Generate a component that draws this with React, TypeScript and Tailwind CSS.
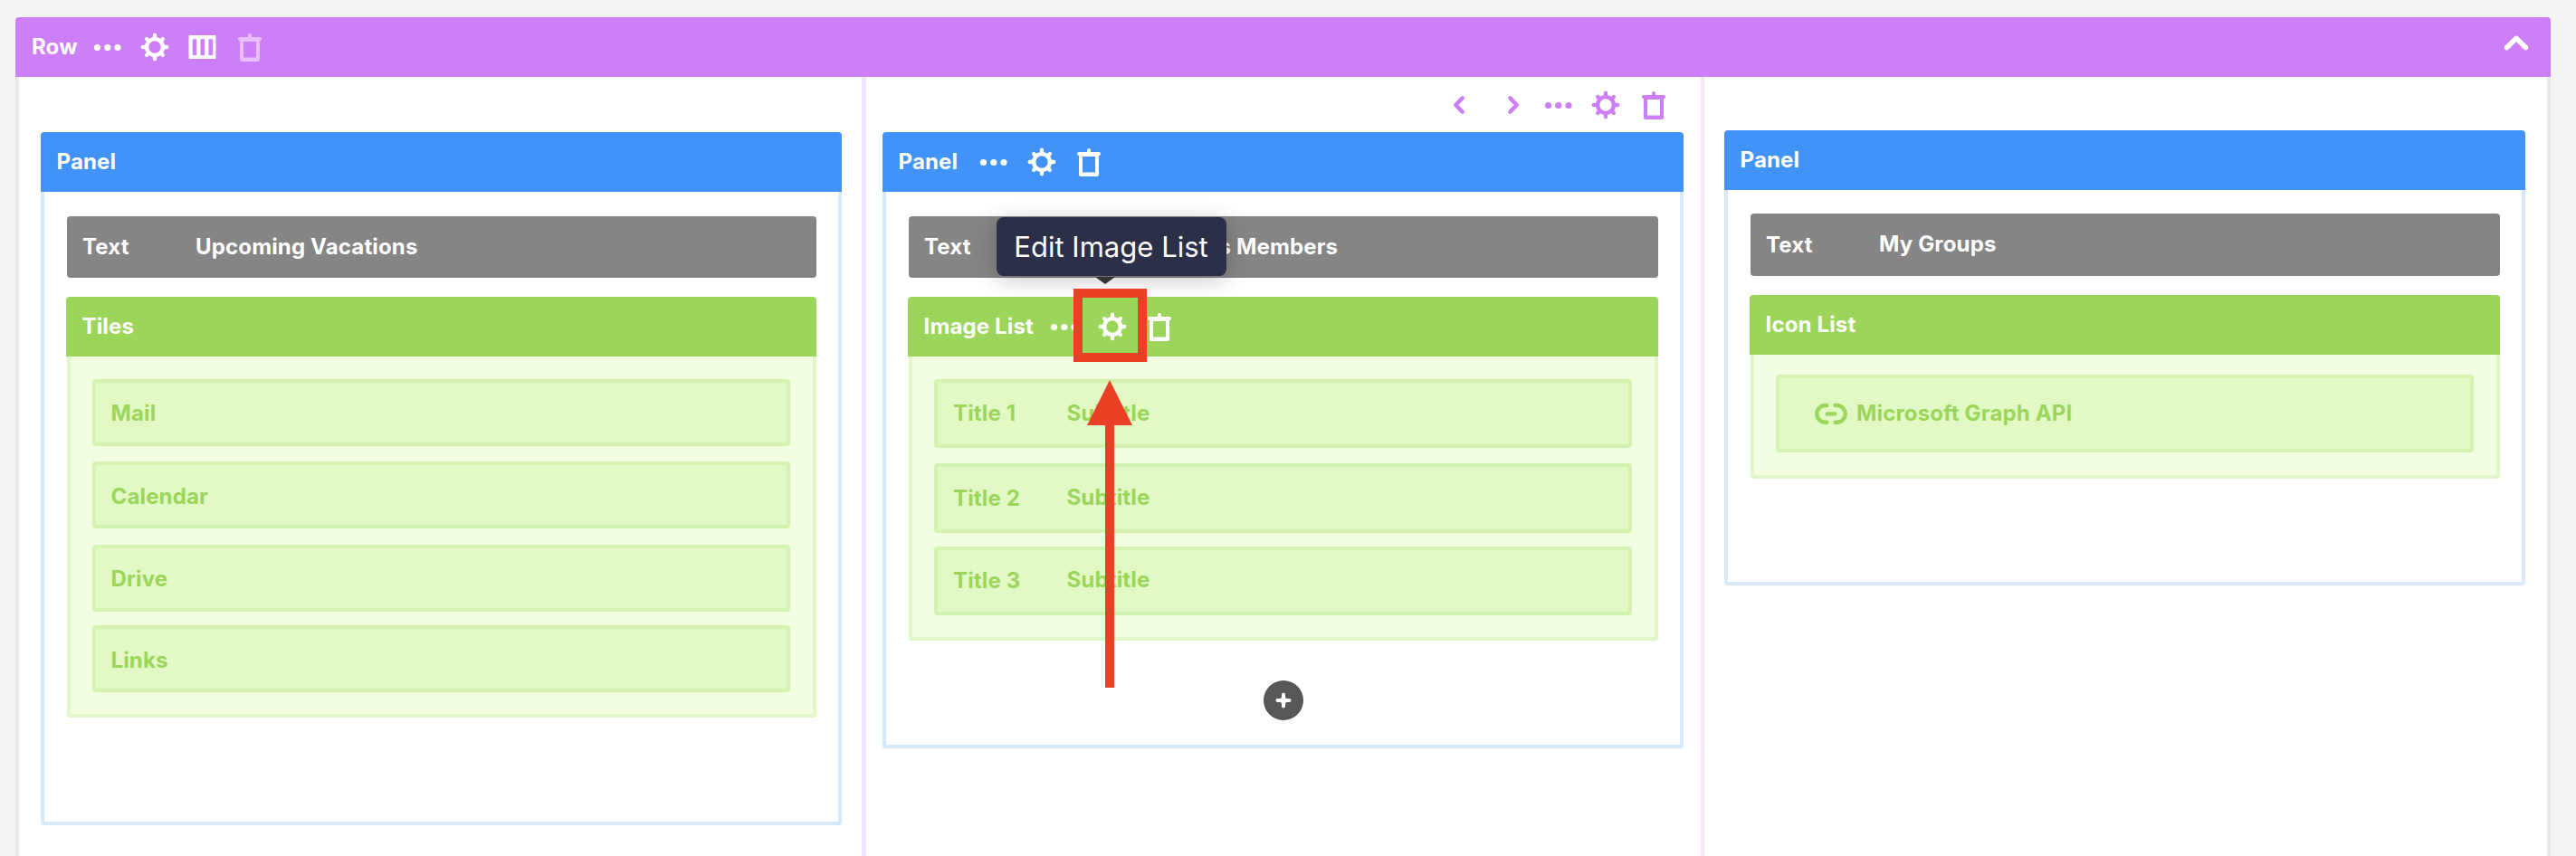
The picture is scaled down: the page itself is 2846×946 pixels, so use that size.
import type { ReactNode } from 'react';

function Dots() {
  return (
    <svg className="size-8 shrink-0" viewBox="0 0 32 32" fill="currentColor">
      <circle cx="4.5" cy="16.5" r="3.6" />
      <circle cx="15.8" cy="16.5" r="3.6" />
      <circle cx="27" cy="16.5" r="3.6" />
    </svg>
  );
}

const SPOKES = [0, 45, 90, 135, 180, 225, 270, 315];

function Gear() {
  return (
    <svg className="size-8 shrink-0" viewBox="0 0 32 32" fill="none" stroke="currentColor" strokeLinecap="round">
      <circle cx="16" cy="16" r="8.900" strokeWidth="4.400" />
      {SPOKES.map((a) => (
        <line key={a} x1="16" y1="6" x2="16" y2={a % 90 === 0 ? 2.7 : 3.4} strokeWidth="4.300" transform={`rotate(${a} 16 16)`} />
      ))}
    </svg>
  );
}

function Trash({ faded = false }: { faded?: boolean }) {
  return (
    <svg className={faded ? 'size-8 shrink-0 opacity-50' : 'size-8 shrink-0'} viewBox="0 0 32 32" fill="currentColor">
      <path
        fillRule="evenodd"
        d="M14 5V3a2 2 0 0 1 4 0v2h9a2 2 0 0 1 2 2.2c0 1.2-.9 1.8-2 1.8V30a2 2 0 0 1-2 2H7a2 2 0 0 1-2-2V9C3.900 9 3 8.300 3 7.200A2 2 0 0 1 5 5zM9 10v17.500h14V10z"
      />
    </svg>
  );
}

function Columns() {
  return (
    <svg className="size-8 shrink-0" viewBox="0 0 32 32" fill="currentColor">
      <path
        fillRule="evenodd"
        d="M1.500 3h28a1 1 0 0 1 1 1v24a1 1 0 0 1-1 1h-28a1 1 0 0 1-1-1V4a1 1 0 0 1 1-1zM4.700 7.200v17.800h4.500V7.200zM13.500 7.200v17.800h4.700V7.200zM22.500 7.200v17.800h4.700V7.200z"
      />
    </svg>
  );
}

function Chevron({ d, width }: { d: string; width: number }) {
  return (
    <svg className="size-8 shrink-0" viewBox="0 0 32 32" fill="none" stroke="currentColor" strokeWidth={width} strokeLinecap="round" strokeLinejoin="round">
      <path d={d} />
    </svg>
  );
}

function LinkIcon() {
  return (
    <svg className="h-6 w-9 shrink-0" viewBox="0 0 36 24" fill="none" stroke="currentColor" strokeWidth="4.400" strokeLinecap="round">
      <path d="M13.300 3h-1.600a9.400 9.400 0 0 0 0 18.800H13.300M22.500 3h1.800a9.400 9.400 0 0 1 0 18.800H22.500M13.700 12.400h8.600" />
    </svg>
  );
}

function Panel({ tools, className, children }: { tools?: ReactNode; className: string; children: ReactNode }) {
  return (
    <section className={`flex w-[885px] flex-col ${className}`}>
      <header className="flex h-[66px] shrink-0 items-center rounded-t-[4px] bg-[#4293f8] pl-[17.500px] text-white">
        <span>Panel</span>
        {tools}
      </header>
      <div className="flex-1 rounded-b-[4px] border-4 border-t-0 border-[#d8e8fd] pr-6 pl-6">{children}</div>
    </section>
  );
}

function TextBar({ className, children }: { className: string; children: ReactNode }) {
  return (
    <div className={`ml-px flex items-center rounded-[4px] bg-[#858585] pl-[17px] text-white ${className}`}>
      <span className="w-[125px]">Text</span>
      {children}
    </div>
  );
}

function Block({ title, tools, className, children }: { title: string; tools?: ReactNode; className: string; children: ReactNode }) {
  return (
    <div className={className}>
      <div className="flex h-[66px] items-center rounded-t-[4px] bg-[#9bd65a] pl-[17.500px] text-white">
        <span>{title}</span>
        {tools}
      </div>
      <div className="ml-px rounded-b-[4px] border-4 border-t-0 border-[#e1f7c8] bg-[#f1fee2] px-6">{children}</div>
    </div>
  );
}

function Item({ className, children }: { className: string; children: ReactNode }) {
  return (
    <div className={`mr-px flex items-center rounded-[4px] border-4 border-[#d4f3ae] bg-[#e2f9c5] text-[#9bd65a] ${className}`}>
      {children}
    </div>
  );
}

function Entry({ title, className, raised = false }: { title: string; className: string; raised?: boolean }) {
  return (
    <Item className={`pl-[17px] ${className}`}>
      <span className="w-[125.500px]">{title}</span>
      <span className={raised ? 'pb-[2px]' : ''}>Subtitle</span>
    </Item>
  );
}

export default function App() {
  return (
    <div className="relative h-[946px] w-[2846px] overflow-hidden bg-[#f4f4f4] pt-[19px] pl-[17px] font-['Inter',sans-serif] text-[24px] leading-[30px] font-bold tracking-[0.15px] whitespace-nowrap">
      <div className="flex h-[927px] w-[2801px] flex-col">
        <header className="flex h-[66px] shrink-0 items-center rounded-t-[4px] bg-[#cd7ef9] pl-[18px] text-white">
          <span className="w-[67.500px]">Row</span>
          <div className="flex gap-[20.500px]">
            <Dots />
            <Gear />
            <Columns />
            <Trash faded />
          </div>
          <div className="mr-[22.500px] ml-auto flex pb-[10px]">
            <Chevron width={5.5} d="M5.500 21.500 16 11.300 26.500 21.500" />
          </div>
        </header>

        <div className="flex flex-1 border-x-4 border-[#e9e9e9] bg-white">
          <div className="w-[936px] border-r-[5px] border-[#f5e6ff] pt-[61px] pl-6">
            <Panel className="h-[766px]">
              <TextBar className="mt-[27px] h-[68px]">
                <span>Upcoming Vacations</span>
              </TextBar>
              <Block className="mt-[21px]" title="Tiles">
                <div className="flex flex-col pt-[25px] pb-6">
                  <Item className="h-[74px] pt-[2px] pl-[16.500px]">Mail</Item>
                  <Item className="mt-[17px] h-[74px] pt-1 pl-[16.500px]">Calendar</Item>
                  <Item className="mt-[18px] h-[74px] pt-[2px] pl-[16.500px]">Drive</Item>
                  <Item className="mt-[15px] h-[74px] pt-1 pl-[16.500px]">Links</Item>
                </div>
              </Block>
            </Panel>
          </div>

          <div className="w-[926px] border-r-4 border-[#f5e6ff] pl-[18px]">
            <div className="flex h-[61px] items-center pl-[621px] text-[#cd7ef9]">
              <Chevron width={4.5} d="M19.700 8.300 12.300 16 19.700 23.700" />
              <div className="ml-7 flex">
                <Chevron width={4.5} d="M12.300 8.300 19.700 16 12.300 23.700" />
              </div>
              <div className="ml-[17.500px] flex gap-[20.500px]">
                <Dots />
                <Gear />
                <Trash />
              </div>
            </div>
            <Panel
              className="h-[681px]"
              tools={
                <div className="ml-6 flex gap-[20.500px]">
                  <Dots />
                  <Gear />
                  <Trash />
                </div>
              }
            >
              <TextBar className="mt-[27px] h-[68px]">
                <span className="pl-[200.500px]">s Members</span>
              </TextBar>
              <Block
                className="mt-[21px]"
                title="Image List"
                tools={
                  <div className="ml-[18px] flex gap-[20.500px]">
                    <Dots />
                    <Gear />
                    <Trash />
                  </div>
                }
              >
                <div className="flex flex-col pt-[25px] pb-6">
                  <Entry className="h-[76px]" title="Title 1" />
                  <Entry className="mt-[17px] h-[77px]" title="Title 2" raised />
                  <Entry className="mt-[15px] h-[76px]" title="Title 3" raised />
                </div>
              </Block>
              <div className="mx-auto mt-11 flex size-11 items-center justify-center rounded-full bg-[#575757]">
                <svg className="size-[18px]" viewBox="0 0 18 18" fill="#fff">
                  <path d="M7 2.500a2 2 0 0 1 4 0v2.500q0 2 2 2h2.500a2 2 0 0 1 0 4h-2.500q-2 0-2 2v2.500a2 2 0 0 1-4 0v-2.500q0-2-2-2h-2.500a2 2 0 0 1 0-4h2.500q2 0 2-2z" />
                </svg>
              </div>
            </Panel>
          </div>

          <div className="flex-1 pt-[59px] pl-[22px]">
            <Panel className="h-[503px]">
              <TextBar className="mt-[26px] h-[69px]">
                <span className="pb-[2px]">My Groups</span>
              </TextBar>
              <Block className="mt-[21px]" title="Icon List">
                <div className="pt-[22px] pb-[25px]">
                  <Item className="h-[86px] pl-[39px]">
                    <LinkIcon />
                    <span className="ml-[10px]">Microsoft Graph API</span>
                  </Item>
                </div>
              </Block>
            </Panel>
          </div>
        </div>
      </div>

      <div className="absolute top-[240px] left-[1101px] flex h-[65px] w-[254px] items-center justify-center rounded-[8px] bg-[#2c2f48] pr-px text-[31px] font-normal tracking-[0.02px] text-white shadow-[0_4px_24px_rgba(0,0,0,0.22)]">
        Edit Image List
      </div>
      <svg className="absolute top-[306px] left-[1210px] h-2 w-[22px]" viewBox="0 0 22 8">
        <path d="M0 0h22L11 8z" fill="#333" />
      </svg>
      <div className="absolute top-[319px] left-[1186px] size-[81px] border-[10px] border-[#ea4025]" />
      <svg className="absolute top-[420px] left-[1201px] h-[340px] w-[50px]" viewBox="0 0 50 340" fill="#ea4025">
        <path d="M25 0 50 50H30V340H20V50H0z" />
      </svg>
    </div>
  );
}
